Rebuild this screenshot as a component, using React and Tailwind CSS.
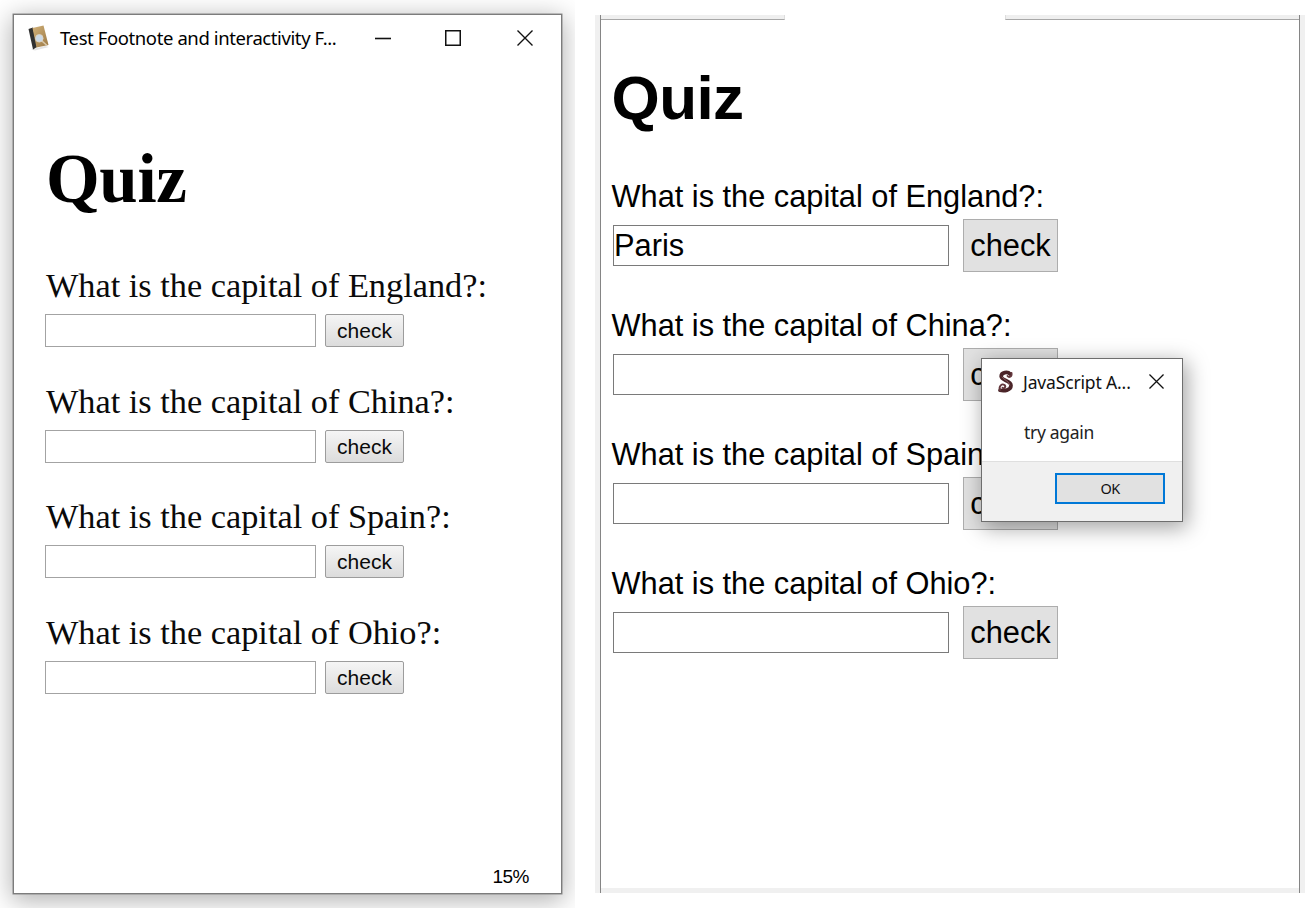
const capitals = ["England", "China", "Spain", "Ohio"];

function CloseIcon({ className }) {
  return (
    <svg className={className} viewBox="0 0 16 16" fill="none" stroke="#111" strokeWidth="1.4">
      <path d="M0.5 0.5 L15.5 15.5 M15.5 0.5 L0.5 15.5" />
    </svg>
  );
}

function BookIcon() {
  return (
    <svg className="h-[26px] w-[22px] shrink-0" viewBox="0 0 22 26">
      <defs>
        <linearGradient id="cover" x1="0" y1="0" x2="1" y2="1">
          <stop offset="0" stopColor="#d2b27a" />
          <stop offset="1" stopColor="#9b7844" />
        </linearGradient>
      </defs>
      <path d="M3 24.5 L17 21 L21 22 L7 25.5 Z" fill="#e4e4e4" />
      <path d="M0.5 4 L5 2.5 L9 22 L5 24.5 Z" fill="#303030" />
      <path d="M4.5 3 L15.5 0.5 L20.5 20 L8.5 22.5 Z" fill="url(#cover)" />
      <path d="M14 16 L19 20.5" stroke="#d8c8aa" strokeWidth="1.6" />
      <circle cx="11.3" cy="13.3" r="3.8" fill="#cbd9e6" stroke="#ddd6c8" strokeWidth="0.8" />
    </svg>
  );
}

function SigilIcon() {
  return (
    <svg className="h-[23px] w-[18px] shrink-0" viewBox="0 0 18 23" fill="none" strokeLinecap="round">
      <path d="M13 4 C11 1.500 4 2 4.200 6.500 C4.500 11 14 10 14 15.500 C14 20.500 7 21.200 3 20.300" stroke="#4a2428" strokeWidth="3.700" />
      <path d="M3 20 C1.500 16 5 13.200 7.500 15 C9.500 17 7 19 5.500 17.800" stroke="#64383d" strokeWidth="1.900" />
      <path d="M14.500 3 C15.200 7 12 8 10.500 6" stroke="#64383d" strokeWidth="1.900" />
      <path d="M5 7 C7 10 12 11 12.800 15" stroke="#a5777a" strokeWidth="0.700" />
    </svg>
  );
}

function ReaderWindow() {
  return (
    <section className="h-[908px] w-[575px] shrink-0 overflow-hidden pl-[13px] pt-[14px]">
      <div className="flex h-[880px] w-[549px] flex-col border border-[#7c7c7c] bg-white shadow-[0_0_0_0.5px_#8a8a8a,0_5px_24px_2px_rgba(0,0,0,0.3)]">
        <header className="flex h-[45px] shrink-0 items-center pl-[14px]">
          <BookIcon />
          <span className="ml-[10px] w-[315px] whitespace-nowrap pt-px font-['Noto_Sans',sans-serif] text-[18.5px] tracking-[-0.4px] text-black">
            Test Footnote and interactivity F...
          </span>
          <svg className="h-4 w-4" viewBox="0 0 16 16">
            <path d="M0 8.500 H16" stroke="#111" strokeWidth="1.600" />
          </svg>
          <svg className="ml-[54px] h-4 w-4" viewBox="0 0 16 16" fill="none">
            <path d="M0.750 0.750 H15.250 V15.250 H0.750 Z" stroke="#111" strokeWidth="1.500" />
          </svg>
          <CloseIcon className="ml-[56px] h-4 w-4" />
        </header>
        <main className="flex-1 pl-[31px] pt-[79px] font-['Liberation_Serif',serif] text-[#0a0a0a]">
          <h1 className="h-[126px] pl-px text-[69px] font-bold leading-[80px] tracking-[-0.3px] text-black">Quiz</h1>
          {capitals.map((place) => (
            <div key={place} className="h-[115.7px]">
              <p className="h-[49px] whitespace-nowrap pl-px text-[34.300px] leading-[40px]">What is the capital of {place}?:</p>
              <div className="flex gap-[9px]">
                <input className="h-[33px] w-[271px] border-[1.5px] border-[#a3a3a3] bg-white outline-none" />
                <button className="h-[33px] w-[79px] rounded-[2px] border border-[#9c9c9c] bg-linear-to-b from-[#f5f5f5] to-[#dcdcdc] font-['Liberation_Sans',sans-serif] text-[21px] leading-[29px]">
                  check
                </button>
              </div>
            </div>
          ))}
        </main>
        <footer className="flex h-[33px] shrink-0 items-center justify-end pr-[32px] pt-[2px] font-['Liberation_Sans',sans-serif] text-[19px] tracking-[-0.5px]">
          15%
        </footer>
      </div>
    </section>
  );
}

function PreviewPane() {
  return (
    <section className="ml-5 mt-[15px] flex h-[878px] w-[710px] flex-col border-x-[5px] border-[#f0f0f0] bg-white">
      <div className="flex h-full flex-col border-x border-[#858585]">
        <div className="flex h-[5px] shrink-0 justify-between">
          <div className="w-[184px] border-b border-r border-[#a8a8a8] border-r-[#ddd] bg-[#efefef]" />
          <div className="w-[294px] border-b border-l border-[#a8a8a8] border-l-[#ddd] bg-[#efefef]" />
        </div>
        <main className="flex-1 pl-[10.500px] pt-[38px] font-['Liberation_Sans',sans-serif] text-black">
          <h1 className="h-[119px] text-[62px] font-bold leading-[80px] tracking-[-0.6px]">Quiz</h1>
          {capitals.map((place, i) => (
            <div key={place} className="h-[129px]">
              <p className="h-[42px] whitespace-nowrap text-[30.750px] leading-[40px]">What is the capital of {place}?:</p>
              <div className="flex items-center gap-[14px] pl-[1.500px]">
                <input
                  defaultValue={i === 0 ? "Paris" : ""}
                  className="h-[41px] w-[336px] border border-[#7a7a7a] bg-white pt-[2px] text-[30.800px] outline-none"
                />
                <button className="h-[53px] w-[95px] border border-[#adadad] bg-[#e1e1e1] pt-[2px] text-[30.800px]">check</button>
              </div>
            </div>
          ))}
        </main>
        <div className="h-[5px] shrink-0 bg-[#f0f0f0]" />
      </div>
    </section>
  );
}

function AlertDialog() {
  return (
    <div
      role="alertdialog"
      className="absolute left-[981px] top-[358px] flex h-[164px] w-[202px] flex-col border-[1.500px] border-[#6e6e6e] bg-white font-['Noto_Sans',sans-serif] text-[#111] shadow-[3px_5px_20px_1px_rgba(0,0,0,0.36)]"
    >
      <header className="flex h-[45px] items-center pl-[15px]">
        <SigilIcon />
        <span className="ml-[8px] w-[126px] whitespace-nowrap pt-px text-[17.500px] tracking-[-0.15px]">JavaScript A...</span>
        <CloseIcon className="h-[15px] w-[15px]" />
      </header>
      <p className="h-[57px] pl-[42px] pt-[15px] text-[17.500px] leading-[26px] tracking-[-0.3px] text-[#222]">try again</p>
      <footer className="flex flex-1 justify-end border-t border-[#dfdfdf] bg-[#f0f0f0] pr-[17px] pt-[11px]">
        <button className="h-[31px] w-[110px] border-2 border-[#0078d7] bg-[#e1e1e1] text-[14.500px] tracking-[-0.6px]">OK</button>
      </footer>
    </div>
  );
}

export default function App() {
  return (
    <div className="relative flex h-[908px] w-[1305px] overflow-hidden bg-white">
      <ReaderWindow />
      <PreviewPane />
      <AlertDialog />
    </div>
  );
}
